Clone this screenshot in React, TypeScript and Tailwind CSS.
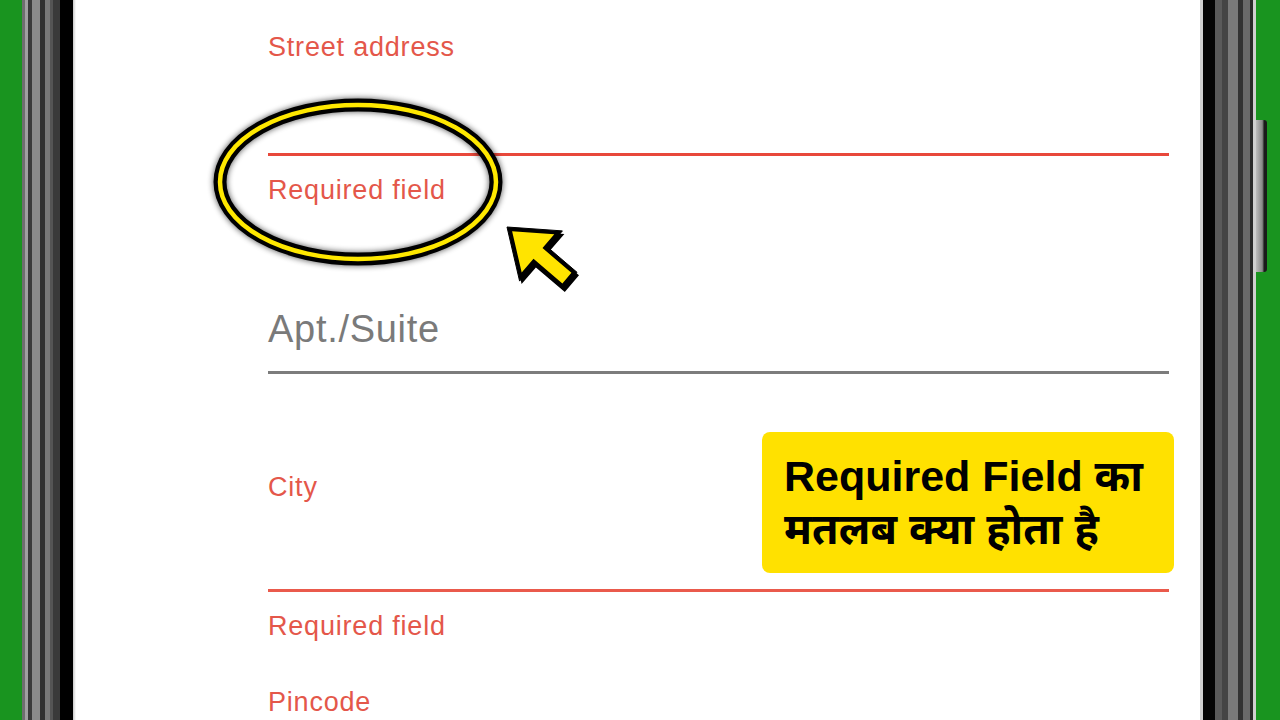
import React from "react";

const label =
  "block text-[27px] leading-none tracking-[0.8px] text-[#e4574a] font-['Liberation_Sans',Arial,sans-serif]";

const outer = "507,227 562.4,230.9 548.1,247.6 577,272.3 562.8,289.1 533.9,264.4 519.6,281.1";
const inner = "512.1,231.3 554.3,234.3 542.5,248.1 571.4,272.8 562.4,283.4 533.5,258.7 521.7,272.5";

export default function App() {
  return (
    <div className="flex h-[720px] w-[1280px] overflow-hidden bg-[#19941f]">
      <div className="w-[22px] shrink-0 bg-[#19941f]" />
      <div className="w-[54px] shrink-0 bg-[linear-gradient(to_right,#6e6e6e_0px,#6e6e6e_3px,#a0a0a0_3px,#a0a0a0_6px,#3a3a3a_6px,#3a3a3a_10px,#8a8a8a_10px,#8a8a8a_18px,#2f2f2f_18px,#2f2f2f_23px,#777777_23px,#777777_28px,#555555_28px,#555555_31px,#3a3a3a_31px,#3a3a3a_38px,#000000_38px,#000000_51px,#c8c8c8_51px,#ffffff_54px)]" />
      <div className="relative flex-1 bg-white">
        <div className="flex flex-col pl-[192px] pr-[31px] pt-[34px]">
          <span className={label}>Street address</span>
          <div className="mt-[92px] h-[3px] bg-[#e8483b]" />
          <span className={`${label} mt-[21px]`}>Required field</span>
          <span className="mt-[106px] block text-[38px] leading-none tracking-[0.7px] text-[#7a7a7a] font-['Liberation_Sans',Arial,sans-serif]">
            Apt./Suite
          </span>
          <div className="mt-[23px] h-[3px] bg-[#7c7c7c]" />
          <span className={`${label} mt-[100px]`}>City</span>
          <div className="mt-[88px] h-[3px] bg-[#ea5a4c]" />
          <span className={`${label} mt-[21px]`}>Required field</span>
          <span className={`${label} mt-[49px]`}>Pincode</span>
        </div>

        <svg
          className="pointer-events-none absolute left-0 top-0 h-[720px] w-[1124px]"
          viewBox="76 0 1124 720"
        >
          <defs>
            <filter id="glow" x="-20%" y="-20%" width="140%" height="140%">
              <feGaussianBlur in="SourceAlpha" stdDeviation="3" />
              <feComponentTransfer>
                <feFuncA type="linear" slope="0.7" />
              </feComponentTransfer>
              <feMerge>
                <feMergeNode />
                <feMergeNode in="SourceGraphic" />
              </feMerge>
            </filter>
          </defs>
          <g filter="url(#glow)">
            <ellipse cx="358" cy="182" rx="138" ry="77" fill="none" stroke="#000" strokeWidth="13" />
            <ellipse cx="358" cy="182" rx="138" ry="77" fill="none" stroke="#ffe800" strokeWidth="4.5" />
          </g>
          <polygon points={outer} transform="translate(2 3)" fill="#000" />
          <polygon points={outer} fill="#000" stroke="#000" strokeWidth="1" strokeLinejoin="round" />
          <polygon points={inner} fill="#ffe400" />
        </svg>

        <div className="absolute left-[686px] top-[432px] h-[141px] w-[412px] rounded-[8px] bg-[#ffe100] pl-[22px] pt-[18px]">
          <p className="text-[43px] font-bold leading-[53px] text-black font-['Liberation_Sans',Arial,'Noto_Sans_Devanagari','Lohit_Devanagari',sans-serif]">
            Required Field का
            <br />
            मतलब क्या होता है
          </p>
        </div>
      </div>
      <div className="w-[56px] shrink-0 bg-[linear-gradient(to_right,#cfcfcf_0px,#cfcfcf_3px,#050505_3px,#050505_15px,#5a5a5a_15px,#5a5a5a_22px,#444444_22px,#444444_28px,#7a7a7a_28px,#7a7a7a_38px,#333333_38px,#333333_43px,#6a6a6a_43px,#6a6a6a_50px,#2a2a2a_50px,#2a2a2a_53px,#d0d0d0_53px,#d0d0d0_56px)]" />
      <div className="relative w-[24px] shrink-0 bg-[#19941f]">
        <div className="absolute left-0 top-[120px] h-[152px] w-[11px] rounded-br-[3px] rounded-tr-[3px] bg-[linear-gradient(to_right,#bdbdbd_0px,#8a8a8a_6px,#6a6a6a_7px,#1a1a1a_8px,#1a1a1a_11px)]" />
      </div>
    </div>
  );
}
